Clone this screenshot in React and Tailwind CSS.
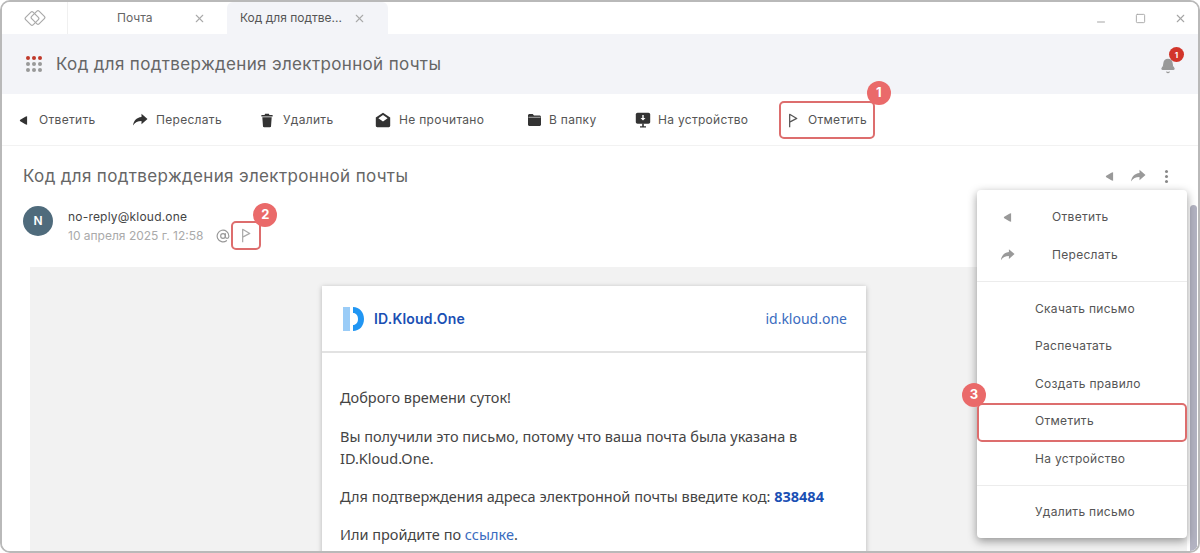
import React from "react";
import { X, Minus, Square, Bell, AtSign } from "lucide-react";

const ReplyIcon = ({ className }) => (
  <svg viewBox="0 0 10 12" className={className} fill="currentColor">
    <path d="M9 1.200v9.600c-.9-.1-1.600-.5-2.400-1L1.400 6.800C.8 6.400.8 5.600 1.400 5.200l5.200-3C7.400 1.700 8.100 1.300 9 1.200z" />
  </svg>
);

const ForwardIcon = ({ className }) => (
  <svg viewBox="0 0 16 14" className={className} fill="currentColor">
    <path d="M9.500.8 15.500 6l-6 5.200V8.100C5.700 8.100 3 9.300 1 12.600 1.500 7.800 4.300 4.500 9.500 3.900z" />
  </svg>
);

const TrashIcon = ({ className }) => (
  <svg viewBox="0 0 14 16" className={className} fill="currentColor">
    <path d="M5 .8h4l.6 1.200H13v1.600H1V2h3.400zM2 4.600h10l-.7 9.600c0 .6-.5 1-1.100 1H3.800c-.6 0-1.100-.4-1.100-1z" />
  </svg>
);

const MailOpenIcon = ({ className }) => (
  <svg viewBox="0 0 16 16" className={className} fill="currentColor">
    <path d="M8 .8 15.200 5.600v8.200c0 .8-.6 1.400-1.400 1.400H2.200c-.8 0-1.400-.6-1.400-1.400V5.600zM8 3 3.400 6.200 8 9.400l4.600-3.200z" fillRule="evenodd" />
  </svg>
);

const FolderIcon = ({ className }) => (
  <svg viewBox="0 0 15 14" className={className} fill="currentColor">
    <path d="M2.500 1h3.200l1.300 1.400h5.500c.8 0 1.500.7 1.500 1.500v7.600c0 .8-.7 1.500-1.500 1.500h-10c-.8 0-1.500-.7-1.500-1.500v-9C1 1.700 1.700 1 2.500 1z" />
    <path d="M1.500 4.300h12" stroke="#fff" strokeWidth="0.6" />
  </svg>
);

const DeviceIcon = ({ className }) => (
  <svg viewBox="0 0 16 16" className={className} fill="currentColor">
    <path d="M2.500.8h11c.9 0 1.700.8 1.700 1.700v7.500c0 .9-.8 1.700-1.700 1.700h-11c-.9 0-1.700-.8-1.700-1.700V2.500C.8 1.600 1.600.8 2.500.8z" />
    <path d="M7.300 3h1.400v3h1.800L8 8.600 5.500 6h1.800z" fill="#fff" />
    <path d="M5 14.200h6v1.200H5zM7.200 11.500h1.600v3H7.200z" />
  </svg>
);

const FlagIcon = ({ className }) => (
  <svg viewBox="0 0 12 18" className={className} fill="none" stroke="currentColor" strokeWidth="1.500" strokeLinejoin="round">
    <path d="M2 17V1.500L10.500 6.500 2 11" />
  </svg>
);

const Badge = ({ n, className }) => (
  <span className={`absolute flex h-6 w-6 items-center justify-center rounded-full bg-[#ea6a6a] text-[13px] font-bold text-white ${className}`}>{n}</span>
);

const TOOLBAR = [
  { label: "Ответить", Icon: ReplyIcon, icon: "h-[11px] w-[9px]", w: "w-[113px]", gap: "gap-[11px]" },
  { label: "Переслать", Icon: ForwardIcon, icon: "h-[14px] w-4", w: "w-[128px]", gap: "gap-2" },
  { label: "Удалить", Icon: TrashIcon, icon: "h-[15px] w-[14px]", w: "w-[115px]", gap: "gap-[9px]" },
  { label: "Не прочитано", Icon: MailOpenIcon, icon: "h-4 w-4", w: "w-[152px]", gap: "gap-2" },
  { label: "В папку", Icon: FolderIcon, icon: "h-[14px] w-[15px]", w: "w-[108px]", gap: "gap-[7px]" },
];

const MENU_TOP = ["Скачать письмо", "Распечатать", "Создать правило"];

export default function App() {
  return (
    <div className="h-[553px] w-[1200px] overflow-hidden bg-white font-['Inter','Liberation_Sans',sans-serif] text-[#555]">
      <div className="relative flex h-[553px] flex-col overflow-hidden rounded-[10px] border-2 border-[#b9b9b9]">
        {/* tabs */}
        <div className="flex h-[32px] shrink-0 items-center bg-white">
          <div className="flex h-full w-[66px] items-center justify-center border-r border-[#f0f0f0]">
            <svg viewBox="0 0 22 22" className="h-[22px] w-[22px]" fill="none" stroke="#aaa" strokeWidth="1.200" strokeLinejoin="round">
              <rect x="2.750" y="6.250" width="10.500" height="10.500" rx="1.500" transform="rotate(-45 8 11.500)" />
              <rect x="8.750" y="5.250" width="10.500" height="10.500" rx="1.500" transform="rotate(-45 14 10.500)" />
            </svg>
          </div>
          <div className="flex h-full w-[159px] items-center text-xs text-[#666]">
            <span className="ml-[49px] w-[76px]">Почта</span>
            <X className="h-[13px] w-[13px] text-[#aaa]" />
          </div>
          <div className="flex h-full w-[161px] items-center rounded-t-md bg-[#f3f4f8] pl-[13px] text-xs text-[#555]">
            <span className="w-[113px]">Код для подтве...</span>
            <X className="h-[13px] w-[13px] text-[#aaa]" />
          </div>
          <div className="ml-auto flex items-center gap-[28px] pr-[11px] text-[#a5a5a5]">
            <Minus className="mt-[7px] h-3 w-3" />
            <Square className="h-[11px] w-[11px]" />
            <X className="h-[13px] w-[13px]" />
          </div>
        </div>

        {/* title bar */}
        <div className="flex h-[60px] shrink-0 items-center bg-[#f3f4f8] pl-[24px] pr-[22px]">
          <div className="grid grid-cols-3 gap-[2px]">
            {[0, 1, 2, 3, 4, 5, 6, 7, 8].map((i) => (
              <span key={i} className={`h-[4px] w-[4px] rounded-full ${i < 3 ? "bg-[#c0392b]" : "bg-[#999]"}`} />
            ))}
          </div>
          <h1 className="ml-[14px] mt-[2px] text-[17px] tracking-[0.35px] text-[#666]">Код для подтверждения электронной почты</h1>
          <div className="relative ml-auto mt-1">
            <Bell className="h-4 w-4 fill-[#999] text-[#999]" />
            <span className="absolute -right-[8px] -top-[11px] flex h-[15px] w-[15px] items-center justify-center rounded-full bg-[#d2352b] text-[8px] font-bold text-white">1</span>
          </div>
        </div>

        {/* toolbar */}
        <div className="flex h-[52px] shrink-0 items-center border-b border-[#f2f2f2] bg-white pl-[17px] pt-px text-xs tracking-[0.3px] text-[#555]">
          {TOOLBAR.map(({ label, Icon, icon, w, gap }) => (
            <div key={label} className={`flex items-center ${gap} ${w}`}>
              <Icon className={`${icon} text-[#333]`} />
              <span>{label}</span>
            </div>
          ))}
          <div className="flex w-[144px] items-center gap-[7px]">
            <DeviceIcon className="h-4 w-4 text-[#333]" />
            <span>На устройство</span>
          </div>
          <div className="relative flex h-[38px] w-[96px] items-center gap-[10px] rounded-[5px] border-2 border-[#dd6d6d] pl-[7px]">
            <FlagIcon className="h-[15px] w-[10px] text-[#555]" />
            <span>Отметить</span>
            <Badge n="1" className="-right-[18px] -top-[22px]" />
          </div>
        </div>

        {/* message */}
        <div className="relative min-h-0 flex-1 bg-white">
          <div className="flex items-center justify-between pl-[21px] pr-[30px] pt-[18px]">
            <h2 className="text-[17px] leading-6 tracking-[0.35px] text-[#666]">Код для подтверждения электронной почты</h2>
            <div className="flex items-center gap-4 text-[#999]">
              <ReplyIcon className="h-[11px] w-[9px]" />
              <ForwardIcon className="h-[14px] w-4" />
              <div className="ml-[3px] flex flex-col gap-[2px]">
                <span className="h-[3px] w-[3px] rounded-full bg-[#888]" />
                <span className="h-[3px] w-[3px] rounded-full bg-[#888]" />
                <span className="h-[3px] w-[3px] rounded-full bg-[#888]" />
              </div>
            </div>
          </div>

          <div className="mt-[18px] flex pl-[21px]">
            <div className="flex h-[30px] w-[30px] items-center justify-center rounded-full bg-[#4f6b7c] text-xs font-semibold text-white">N</div>
            <div className="ml-[15px] pt-[3px]">
              <div className="text-xs leading-[15px] tracking-[0.2px] text-[#444]">no-reply@kloud.one</div>
              <div className="-mt-[3px] flex items-center text-xs text-[#aaa]">
                <span>10 апреля 2025 г. 12:58</span>
                <AtSign className="ml-[13px] h-[14px] w-[14px] text-[#999]" />
                <div className="relative ml-[1px] flex h-[29px] w-[30px] items-center justify-center rounded-[5px] border-2 border-[#dd6d6d]">
                  <FlagIcon className="h-[15px] w-[10px] text-[#aaa]" />
                  <Badge n="2" className="-right-[18px] -top-[20px]" />
                </div>
              </div>
            </div>
          </div>

          {/* email body */}
          <div className="ml-[28px] mr-[11px] mt-[17px] h-[300px] bg-[#f2f2f2] pl-[292px] pt-[19px]">
            <div className="h-[300px] w-[544px] bg-white font-['Noto_Sans','Open_Sans',sans-serif] text-[14.500px] text-[#444] shadow-[0_1px_5px_rgba(0,0,0,0.25)]">
              <div className="flex h-[67px] items-center justify-between border-b-2 border-[#e2e2e2] pl-[21px] pr-[19px]">
                <div className="flex items-center gap-[9px]">
                  <svg viewBox="0 0 22 24" className="h-6 w-[22px]">
                    <rect x="0" y="0" width="7" height="24" fill="#9accf7" />
                    <path d="M10 0c6.500 0 11 5 11 12s-4.500 12-11 12v-6c3 0 5-2.500 5-6s-2-6-5-6z" fill="#2196f3" />
                  </svg>
                  <span className="font-['Inter',sans-serif] text-[14px] font-semibold tracking-[0.2px] text-[#1a4fb4]">ID.Kloud.One</span>
                </div>
                <span className="text-sm text-[#3a6cc0]">id.kloud.one</span>
              </div>
              <div className="px-[18px] pt-[33px] leading-[22.500px]">
                <p>Доброго времени суток!</p>
                <p className="mt-[16px]">Вы получили это письмо, потому что ваша почта была указана в ID.Kloud.One.</p>
                <p className="mt-[15.500px]">Для подтверждения адреса электронной почты введите код: <b className="text-[#1a4fb4]">838484</b></p>
                <p className="mt-[15px]">Или пройдите по <span className="text-[#3a6cc0]">ссылке</span>.</p>
              </div>
            </div>
          </div>

          {/* scrollbar */}
          <div className="absolute bottom-0 right-[1px] top-[59px] w-[7px] rounded-t-sm bg-[#b3b3c2]" />

          {/* dropdown */}
          <div className="absolute left-[975px] top-[44px] w-[210px] rounded-[4px] bg-white text-xs tracking-[0.3px] text-[#555] shadow-[0_3px_10px_rgba(0,0,0,0.4)]">
            <div className="border-b border-[#ececec] pb-[7px] pt-[8px]">
              <div className="flex h-[38px] items-center pl-[26px]">
                <ReplyIcon className="h-[11px] w-[9px] text-[#999]" />
                <span className="ml-[40px]">Ответить</span>
              </div>
              <div className="flex h-[38px] items-center pl-[23px]">
                <ForwardIcon className="h-[14px] w-[15px] text-[#999]" />
                <span className="ml-[37px]">Переслать</span>
              </div>
            </div>
            <div className="border-b border-[#ececec] pb-[7px] pt-[8px] pl-[58px]">
              {MENU_TOP.map((t) => (
                <div key={t} className="flex h-[37.500px] items-center">{t}</div>
              ))}
              <div className="relative flex h-[37.500px] items-center">
                Отметить
                <div className="absolute -left-[58px] top-0 h-[39px] w-[210px] rounded-[5px] border-2 border-[#dd6d6d]" />
                <Badge n="3" className="-left-[73px] -top-[20px]" />
              </div>
              <div className="flex h-[37.500px] items-center">На устройство</div>
            </div>
            <div className="flex h-[52px] items-center pl-[58px]">Удалить письмо</div>
          </div>
        </div>
      </div>
    </div>
  );
}
